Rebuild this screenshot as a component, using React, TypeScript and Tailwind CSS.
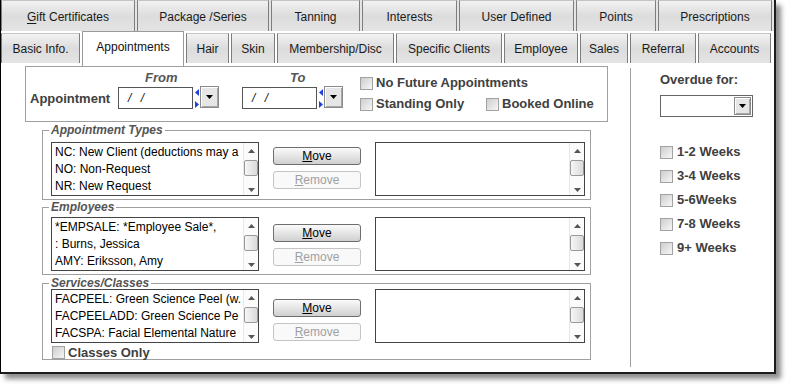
import React from "react";

type T = { l: string; w: string; u?: number; active?: boolean };

const row1: T[] = [
  { l: "Gift Certificates", w: "w-[134px]", u: 0 },
  { l: "Package /Series", w: "w-[132px]" },
  { l: "Tanning", w: "w-[89px]" },
  { l: "Interests", w: "w-[95px]" },
  { l: "User Defined", w: "w-[115px]" },
  { l: "Points", w: "w-[80px]" },
  { l: "Prescriptions", w: "w-[114px]" },
];

const row2: T[] = [
  { l: "Basic Info.", w: "w-[79px]" },
  { l: "Appointments", w: "w-[102px]", active: true },
  { l: "Hair", w: "w-[43px]" },
  { l: "Skin", w: "w-[44px]" },
  { l: "Membership/Disc", w: "w-[117px]" },
  { l: "Specific Clients", w: "w-[106px]" },
  { l: "Employee", w: "w-[74px]" },
  { l: "Sales", w: "w-[48px]" },
  { l: "Referral", w: "w-[66px]" },
  { l: "Accounts", w: "w-[73px]" },
];

function Label({ t }: { t: T }) {
  if (t.u === 0) {
    return (
      <span>
        <span className="underline underline-offset-2">{t.l[0]}</span>
        {t.l.slice(1)}
      </span>
    );
  }
  return <span>{t.l}</span>;
}

const tabBase =
  "border-x border-t border-[#7d7d7d] border-t-[#c4c4c4] bg-linear-to-b from-[#f2f2f2] via-[#dcdcdc] to-[#e4e4e4] flex items-center justify-center text-[12px] text-[#1a1a1a] whitespace-nowrap shrink-0";

function Check() {
  return (
    <span className="block w-[13px] h-[13px] shrink-0 border border-[#a2a2a2] bg-linear-to-br from-[#cdcdcd] to-[#f7f7f7]" />
  );
}

function DownTri() {
  return (
    <svg width="7" height="4" viewBox="0 0 7 4">
      <path d="M0 0h7L3.5 4z" fill="#000" />
    </svg>
  );
}

function ComboBtn() {
  return (
    <div className="w-[19px] h-[22px] border border-[#8a8a8a] bg-[#e6e6e6] flex items-center justify-center shadow-[inset_1px_1px_0_#ffffff,inset_-1px_-1px_0_#a8a8a8]">
      <DownTri />
    </div>
  );
}

function Spinner() {
  return (
    <svg width="7" height="22" viewBox="0 0 7 22" className="shrink-0">
      <path d="M2 5.5L6 2v7z" fill="#1f3fe0" />
      <path d="M2 14v7l4-3.5z" fill="#1f3fe0" />
    </svg>
  );
}

function DateField({ label, pad }: { label: string; pad: string }) {
  return (
    <div className="flex flex-col">
      <div className={`${pad} mt-[3px] text-[13px] leading-[15px] font-bold italic text-[#555]`}>{label}</div>
      <div className="flex items-start mt-[2px]">
        <div className="w-[75px] h-[22px] border border-[#555] bg-white text-[12px] leading-[20px] pl-[9px] tracking-[3px] text-[#111] italic">
          / /
        </div>
        <Spinner />
        <div className="-mt-[1px]">
          <ComboBtn />
        </div>
      </div>
    </div>
  );
}

function Arrow({ up }: { up?: boolean }) {
  return (
    <svg width="7" height="4" viewBox="0 0 7 4" className="shrink-0">
      <path d={up ? "M0 4h7L3.5 0z" : "M0 0h7L3.5 4z"} fill="#555" />
    </svg>
  );
}

function VScroll() {
  return (
    <div className="w-[15px] h-full border-l border-[#e8e8e8] bg-[#fbfbfb] flex flex-col items-center shrink-0">
      <div className="mt-[6px]">
        <Arrow up />
      </div>
      <div className="mt-[7px] w-[14px] h-[16px] rounded-[2px] border border-[#9a9a9a] bg-linear-to-r from-[#f6f6f6] to-[#dadada]" />
      <div className="flex-1" />
      <div className="mb-[3px]">
        <Arrow />
      </div>
    </div>
  );
}

function ListBox({ items, w }: { items: string[]; w: string }) {
  return (
    <div className={`${w} h-[54px] border border-[#444] bg-white flex shrink-0`}>
      <div className="flex-1 min-w-0 overflow-hidden pl-[3px] pt-[1px] text-[12px] leading-[17px] text-black whitespace-nowrap">
        {items.map((i) => (
          <div key={i}>{i}</div>
        ))}
      </div>
      <VScroll />
    </div>
  );
}

function Buttons({ mt }: { mt: string }) {
  return (
    <div className={`ml-[14px] ${mt} w-[88px] flex flex-col shrink-0`}>
      <div className="h-[18px] rounded-[3px] border border-[#6e6e6e] bg-linear-to-b from-[#fbfbfb] to-[#d0d0d0] text-[12px] leading-[16px] text-center text-black">
        <span className="underline">M</span>ove
      </div>
      <div className="mt-[6px] h-[18px] rounded-[3px] border border-[#c4c4c4] bg-[#f9f9f9] text-[12px] leading-[16px] text-center text-[#a0a0a0]">
        <span className="underline">R</span>emove
      </div>
    </div>
  );
}

export default function App() {
  return (
    <div className="w-[786px] h-[386px] bg-white overflow-hidden font-['Liberation_Sans',Arial,sans-serif]">
      <div className="w-[776px] h-[374px] border-l border-l-black border-r-2 border-b-2 border-r-[#1c1c1c] border-b-[#1c1c1c] shadow-[5px_5px_5px_rgba(0,0,0,0.45)] bg-white flex flex-col">
        {/* Tab row 1 */}
        <div className="flex gap-[2px] h-[31px] shrink-0 bg-[#e4e4e4]">
          {row1.map((t) => (
            <div key={t.l} className={`${t.w} h-[31px] pt-[2px] ${tabBase}`}>
              <Label t={t} />
            </div>
          ))}
        </div>
        {/* Tab row 2 */}
        <div className="flex gap-[2px] h-[35px] shrink-0 items-start">
          {row2.map((t) =>
            t.active ? (
              <div
                key={t.l}
                className={`${t.w} h-[35px] shrink-0 bg-white border-x border-t border-[#9a9a9a] flex justify-center pt-[8px] text-[12px] leading-[14px] text-[#111] whitespace-nowrap`}
              >
                {t.l}
              </div>
            ) : (
              <div key={t.l} className={`${t.w} mt-[2px] h-[30px] pt-[1px] ${tabBase}`}>
                <Label t={t} />
              </div>
            )
          )}
        </div>
        {/* Content */}
        <div className="flex flex-1 min-h-0">
          <div className="w-[629px] shrink-0 flex flex-col">
            {/* Appointment box */}
            <div className="ml-[24px] w-[583px] h-[56px] border border-[#a0a0a0] flex items-start shrink-0">
              <div className="ml-[4px] w-[88px] mt-[24px] text-[13px] leading-[16px] font-bold text-[#404040]">
                Appointment
              </div>
              <DateField label="From" pad="pl-[27px]" />
              <div className="ml-[23px]">
                <DateField label="To" pad="pl-[48px]" />
              </div>
              <div className="ml-[17px] mt-[8px] flex flex-col gap-[5px] text-[13px] leading-[16px] font-bold text-[#404040]">
                <div className="flex items-center gap-[3px] h-[16px]">
                  <Check />
                  <span>No Future Appointments</span>
                </div>
                <div className="flex items-center h-[16px]">
                  <div className="w-[126px] flex items-center gap-[3px]">
                    <Check />
                    <span>Standing Only</span>
                  </div>
                  <div className="flex items-center gap-[3px]">
                    <Check />
                    <span>Booked Online</span>
                  </div>
                </div>
              </div>
            </div>

            {/* Appointment Types */}
            <fieldset className="ml-[41px] mt-[1px] w-[549px] min-w-0 border border-[#a0a0a0] px-[8px] pt-[5px] pb-[3px] shrink-0">
              <legend className="-ml-[2px] px-[2px] text-[12px] leading-[14px] font-bold italic text-[#555]">
                Appointment Types
              </legend>
              <div className="flex items-start">
                <ListBox
                  w="w-[208px]"
                  items={["NC: New Client (deductions may a", "NO: Non-Request", "NR: New Request"]}
                />
                <Buttons mt="mt-[5px]" />
                <div className="ml-[14px]">
                  <ListBox w="w-[210px]" items={[]} />
                </div>
              </div>
            </fieldset>

            {/* Employees */}
            <fieldset className="ml-[41px] w-[549px] min-w-0 border border-[#a0a0a0] px-[8px] pt-[3px] pb-[3px] shrink-0">
              <legend className="-ml-[2px] px-[2px] text-[12px] leading-[14px] font-bold italic text-[#555]">
                Employees
              </legend>
              <div className="flex items-start">
                <ListBox
                  w="w-[208px]"
                  items={["*EMPSALE: *Employee Sale*,", ": Burns, Jessica", "AMY: Eriksson, Amy"]}
                />
                <Buttons mt="mt-[7px]" />
                <div className="ml-[14px]">
                  <ListBox w="w-[210px]" items={[]} />
                </div>
              </div>
            </fieldset>

            {/* Services/Classes */}
            <fieldset className="ml-[41px] mt-[2px] w-[549px] min-w-0 border border-[#a0a0a0] px-[8px] pt-0 pb-0 shrink-0">
              <legend className="-ml-[2px] px-[2px] text-[12px] leading-[12px] font-bold italic text-[#555]">
                Services/Classes
              </legend>
              <div className="flex items-start">
                <ListBox
                  w="w-[208px]"
                  items={[
                    "FACPEEL: Green Science Peel (w.",
                    "FACPEELADD: Green Science Pe",
                    "FACSPA: Facial Elemental Nature",
                  ]}
                />
                <Buttons mt="mt-[10px]" />
                <div className="ml-[14px]">
                  <ListBox w="w-[210px]" items={[]} />
                </div>
              </div>
              <div className="ml-[1px] mt-[3px] h-[13px] flex items-center gap-[3px] text-[13px] leading-[13px] font-bold text-[#404040]">
                <Check />
                <span>Classes Only</span>
              </div>
            </fieldset>
          </div>

          {/* Divider */}
          <div className="w-px h-[299px] mt-[2px] bg-[#a0a0a0] shrink-0" />

          {/* Right panel */}
          <div className="flex-1 pl-[29px] flex flex-col">
            <div className="mt-[6px] text-[13px] leading-[16px] font-bold text-[#404040]">Overdue for:</div>
            <div className="mt-[7px] w-[93px] h-[22px] border border-[#666] bg-white flex items-center justify-end pr-[1px]">
              <div className="w-[17px] h-[18px] border border-[#8a8a8a] bg-[#e6e6e6] flex items-center justify-center shadow-[inset_1px_1px_0_#ffffff,inset_-1px_-1px_0_#a8a8a8]">
                <DownTri />
              </div>
            </div>
            <div className="mt-[23px] flex flex-col text-[13px] leading-[16px] font-bold text-[#404040]">
              {["1-2 Weeks", "3-4 Weeks", "5-6Weeks", "7-8 Weeks", "9+ Weeks"].map((w) => (
                <div key={w} className="h-[24px] flex items-center gap-[4px]">
                  <Check />
                  <span>{w}</span>
                </div>
              ))}
            </div>
          </div>
        </div>
      </div>
    </div>
  );
}
